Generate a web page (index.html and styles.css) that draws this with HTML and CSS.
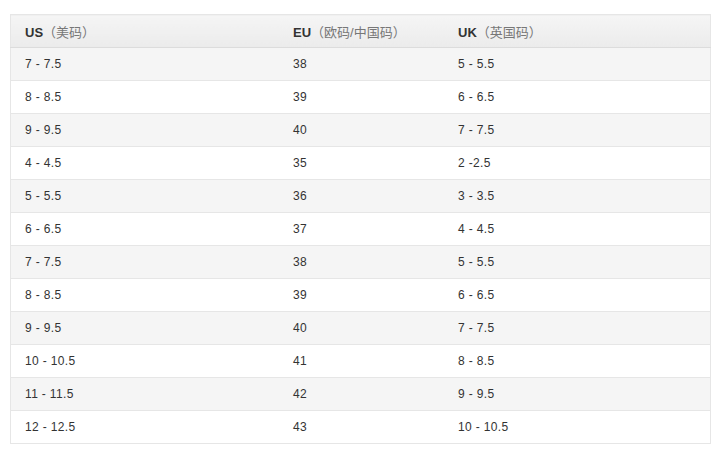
FILE: index.html
```html
<!DOCTYPE html>
<html>
<head>
<meta charset="utf-8">
<link rel="stylesheet" href="styles.css">
</head>
<body>
<div class="wrap">
<table class="size">
<thead>
<tr><th class="c1">US<span class="cn">（美码）</span></th><th class="c2">EU<span class="cn">（欧码/中国码）</span></th><th class="c3">UK<span class="cn">（英国码）</span></th></tr>
</thead>
<tbody>
<tr><td>7 - 7.5</td><td>38</td><td>5 - 5.5</td></tr>
<tr><td>8 - 8.5</td><td>39</td><td>6 - 6.5</td></tr>
<tr><td>9 - 9.5</td><td>40</td><td>7 - 7.5</td></tr>
<tr><td>4 - 4.5</td><td>35</td><td>2 -2.5</td></tr>
<tr><td>5 - 5.5</td><td>36</td><td>3 - 3.5</td></tr>
<tr><td>6 - 6.5</td><td>37</td><td>4 - 4.5</td></tr>
<tr><td>7 - 7.5</td><td>38</td><td>5 - 5.5</td></tr>
<tr><td>8 - 8.5</td><td>39</td><td>6 - 6.5</td></tr>
<tr><td>9 - 9.5</td><td>40</td><td>7 - 7.5</td></tr>
<tr><td>10 - 10.5</td><td>41</td><td>8 - 8.5</td></tr>
<tr><td>11 - 11.5</td><td>42</td><td>9 - 9.5</td></tr>
<tr><td>12 - 12.5</td><td>43</td><td>10 - 10.5</td></tr>
</tbody>
</table>
</div>
</body>
</html>
```
FILE: styles.css
```css
html, body { margin: 0; padding: 0; background: #fff; }
body { font-family: "Liberation Sans", Arial, "Noto Sans CJK SC", sans-serif; color: #333; }
.wrap { padding: 14px 6px 0 10px; }
.size { border-collapse: collapse; width: 701px; table-layout: fixed; border: 1px solid #e6e6e6; }
.size th, .size td { text-align: left; padding: 0 0 0 14px; height: 32px; font-size: 12px; border-bottom: 1px solid #e6e6e6; }
.size td { letter-spacing: 0.35px; }
.size th { font-weight: bold; font-size: 13px; color: #333; background: linear-gradient(#f5f5f5, #ebebeb); border-bottom: 1px solid #dcdcdc; }
.size th .cn { font-weight: normal; color: #777; }
.c1 { width: 254px; }
.c2 { width: 151px; }
.size tbody tr:nth-child(odd) td { background: #f5f5f5; }
.size tbody tr:nth-child(even) td { background: #fff; }
```
